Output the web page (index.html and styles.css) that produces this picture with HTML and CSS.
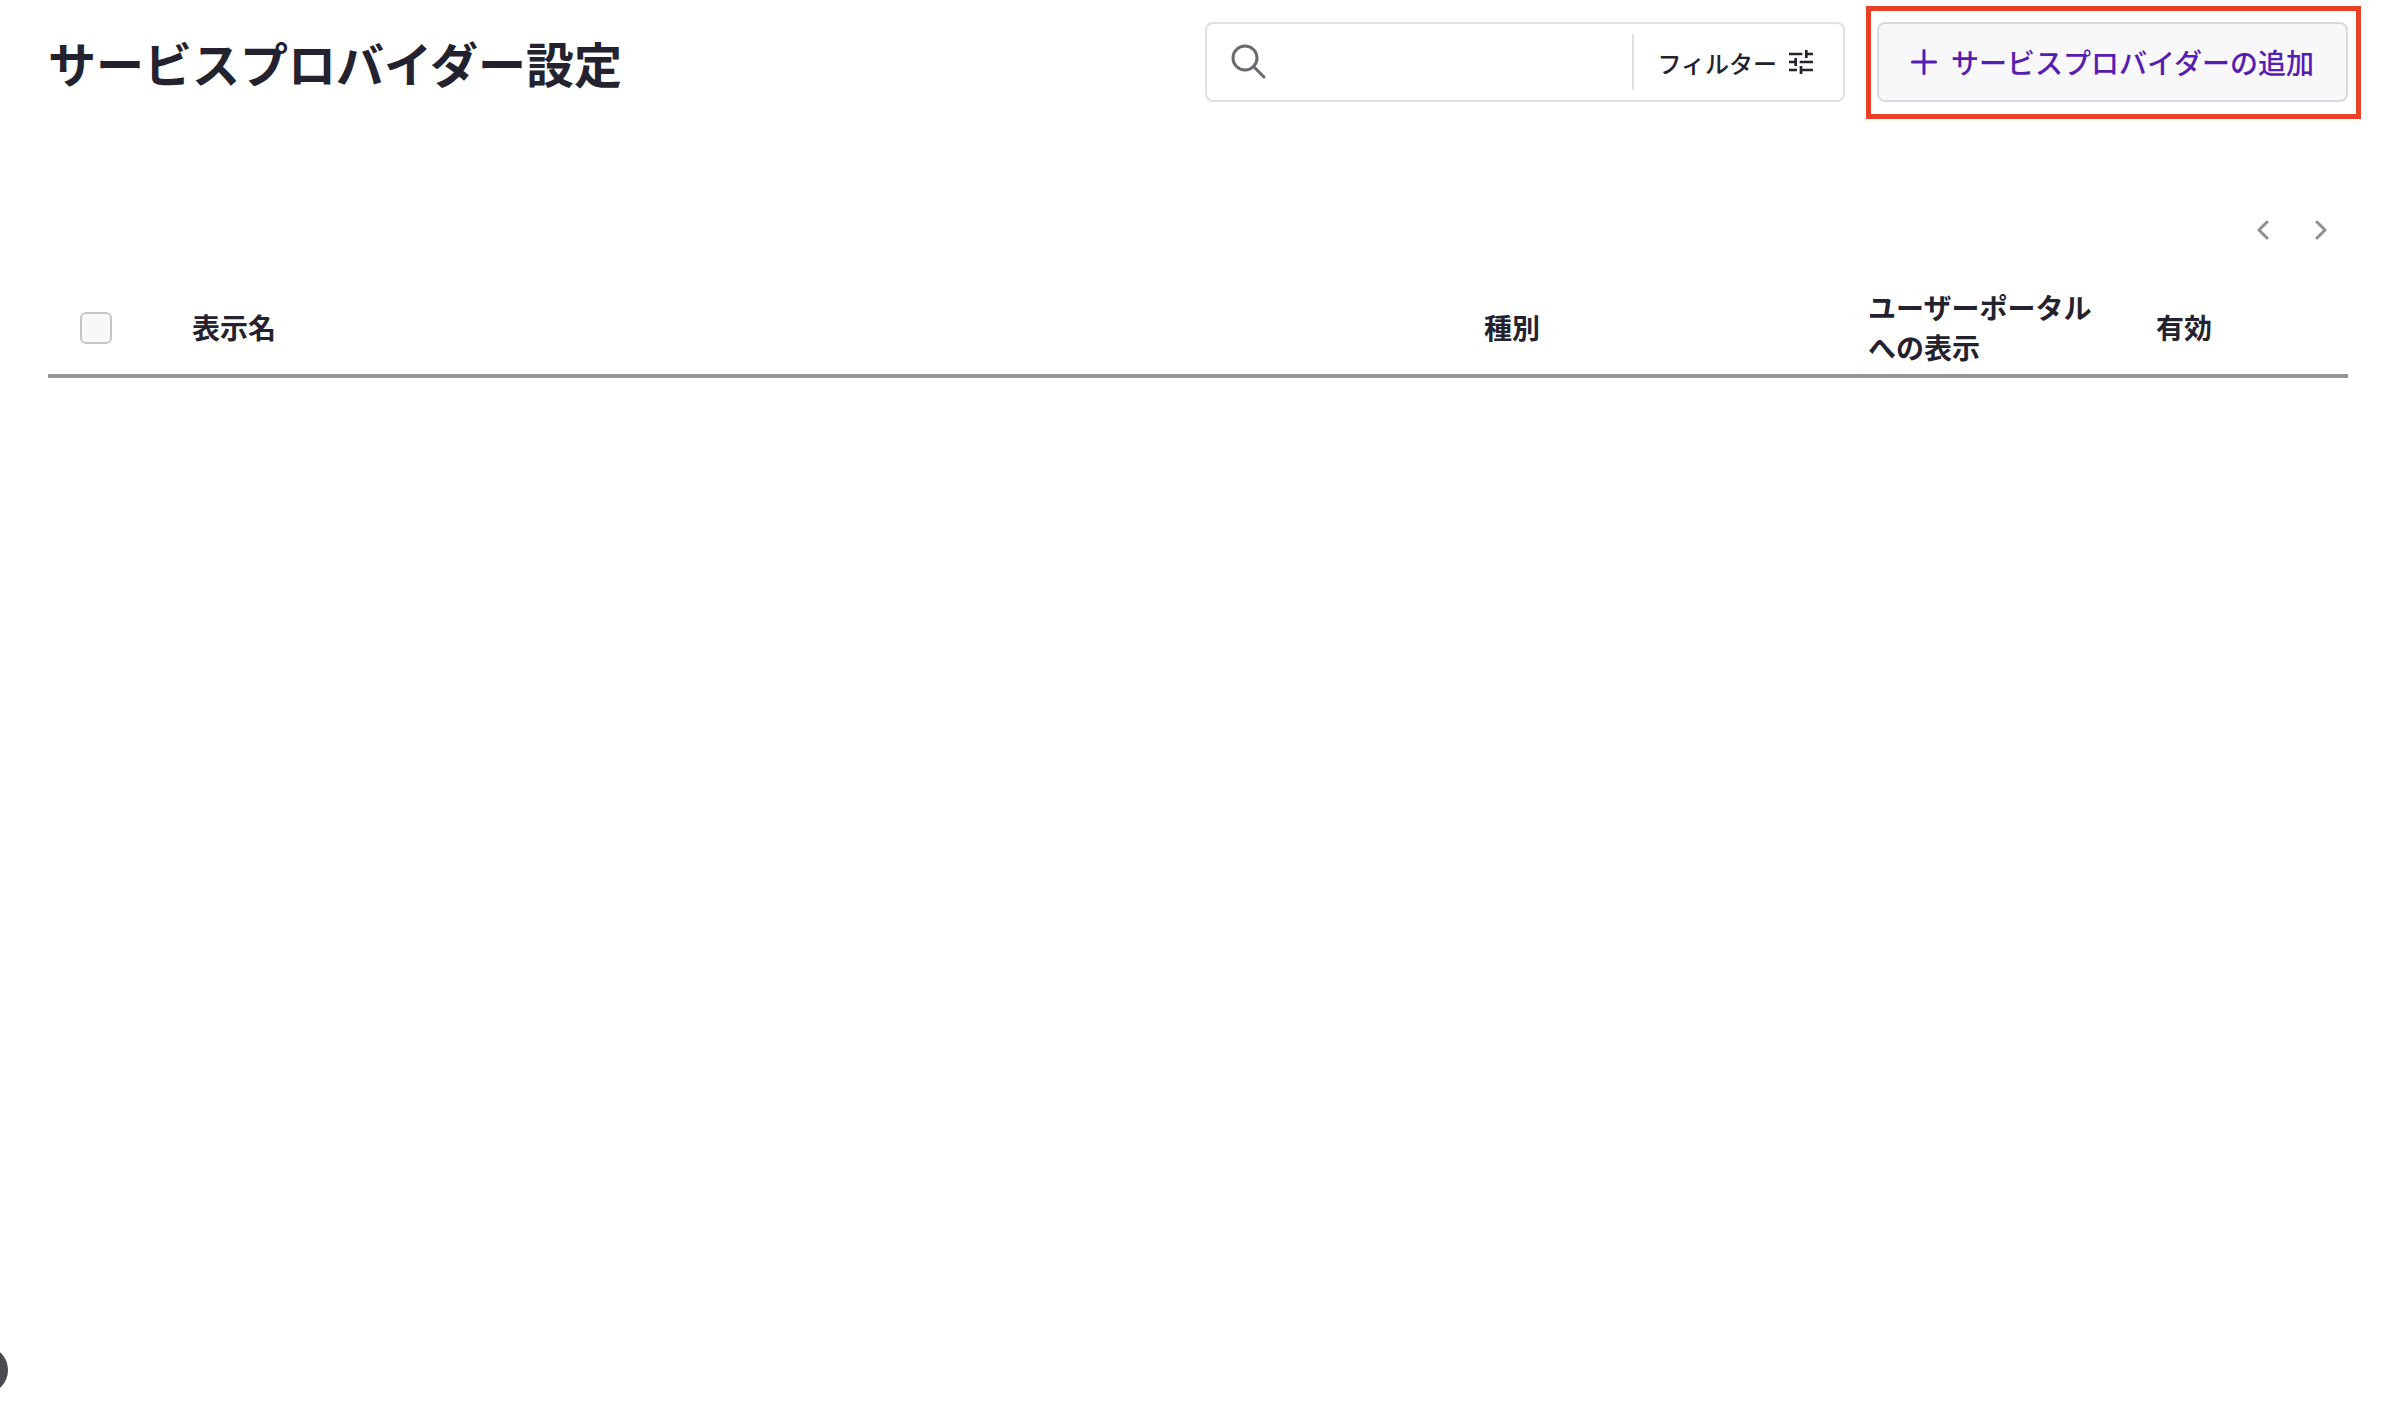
FILE: index.html
```html
<!DOCTYPE html>
<html lang="ja">
<head>
    <meta charset="UTF-8">
    <meta name="viewport" content="width=device-width, initial-scale=1.0">
    <title>サービスプロバイダー設定</title>
    <link rel="stylesheet" href="styles.css">
</head>
<body>
    <main class="page">
        <header class="page-header">
            <h1>サービスプロバイダー設定</h1>
            <form class="search-box" role="search">
                <label class="search-field">
                    <svg class="search-icon" viewBox="0 0 36 36" aria-hidden="true">
                        <circle cx="14" cy="14" r="12"/>
                        <path d="M22.5 22.5L33 33"/>
                    </svg>
                    <input type="search" aria-label="検索">
                </label>
                <button type="button" class="filter-button">
                    フィルター
                    <svg class="filter-icon" viewBox="0 0 24 24" aria-hidden="true">
                        <path d="M3 17v2h6v-2H3zM3 5v2h10V5H3zm10 16v-2h8v-2h-8v-2h-2v6h2zM7 9v2H3v2h4v2h2V9H7zm14 4v-2H11v2h10zm-6-4h2V7h4V5h-4V3h-2v6z"/>
                    </svg>
                </button>
            </form>
            <div class="highlight">
                <button type="button" class="add-button">
                    <svg class="plus-icon" viewBox="0 0 26 26" aria-hidden="true">
                        <path d="M13 1.5v23M1.5 13h23"/>
                    </svg>
                    サービスプロバイダーの追加
                </button>
            </div>
        </header>

        <nav class="pager" aria-label="ページ送り">
            <button type="button" aria-label="前へ">
                <svg viewBox="0 0 20 20" aria-hidden="true"><path d="M14 2L6 10l8 8"/></svg>
            </button>
            <button type="button" aria-label="次へ">
                <svg viewBox="0 0 20 20" aria-hidden="true"><path d="M6 2l8 8-8 8"/></svg>
            </button>
        </nav>

        <table class="providers">
            <thead>
                <tr>
                    <th class="col-check"><input type="checkbox" aria-label="すべて選択"></th>
                    <th>表示名</th>
                    <th class="col-type">種別</th>
                    <th class="col-portal">ユーザーポータルへの表示</th>
                    <th class="col-enabled">有効</th>
                </tr>
            </thead>
            <tbody></tbody>
        </table>
    </main>
    <button type="button" class="side-toggle" aria-label="メニュー"></button>
</body>
</html>
```
FILE: styles.css
```css
* {
    box-sizing: border-box;
}
body {
    margin: 0;
    background: #fff;
    color: #24222f;
    font-family: "Noto Sans CJK JP", sans-serif;
}
button,
input {
    font: inherit;
    color: inherit;
}
button {
    cursor: pointer;
}
svg {
    display: block;
    flex: none;
}
.page {
    padding: 22px 44px 0 48px;
}

/* header */
.page-header {
    display: flex;
    align-items: center;
    height: 80px;
}
h1 {
    margin: 0 auto 0 0;
    font-size: 48px;
    line-height: 80px;
    font-weight: 700;
}
.search-box {
    display: flex;
    align-items: center;
    width: 640px;
    height: 80px;
    margin-right: 32px;
    border: 2px solid #e0e0e0;
    border-radius: 8px;
}
.search-field {
    display: flex;
    align-items: center;
    flex: 1;
    min-width: 0;
    padding: 0 16px 0 24px;
}
.search-field input {
    flex: 1;
    min-width: 0;
    height: 56px;
    padding: 0 16px;
    border: none;
    outline: none;
    background: none;
    font-size: 28px;
}
.search-icon {
    width: 36px;
    height: 36px;
    fill: none;
    stroke: #6a6872;
    stroke-width: 3;
    stroke-linecap: round;
}
.filter-button {
    display: flex;
    align-items: center;
    gap: 8px;
    height: 56px;
    padding: 0 26px 0 24px;
    border: none;
    border-left: 2px solid #e0e0e0;
    background: none;
    font-size: 24px;
    font-weight: 500;
}
.filter-icon {
    width: 32px;
    height: 32px;
    fill: #24222f;
}
.highlight {
    position: relative;
}
.highlight::after {
    content: "";
    position: absolute;
    inset: -16px -13px -17px -11px;
    border: 5px solid #ea4025;
    pointer-events: none;
}
.add-button {
    display: flex;
    align-items: center;
    gap: 14px;
    height: 80px;
    padding: 0 32px;
    border: 2px solid #d9dadd;
    border-radius: 8px;
    background: #f8f8fb;
    color: #561db0;
    font-size: 28px;
    font-weight: 500;
}
.plus-icon {
    width: 26px;
    height: 26px;
    fill: none;
    stroke: #561db0;
    stroke-width: 3;
    stroke-linecap: round;
}

/* pager */
.pager {
    display: flex;
    justify-content: flex-end;
    gap: 18px;
    margin-top: 108px;
    padding-right: 7px;
}
.pager button {
    padding: 10px;
    border: none;
    background: none;
}
.pager svg {
    width: 20px;
    height: 20px;
    fill: none;
    stroke: #8f8f8f;
    stroke-width: 3;
    stroke-linecap: round;
    stroke-linejoin: round;
}

/* table */
.providers {
    width: 100%;
    margin-top: 32px;
    border-collapse: separate;
    border-spacing: 0;
    table-layout: fixed;
}
.providers th {
    padding: 5px 48px 7px 0;
    border-bottom: 4px solid #959595;
    font-size: 28px;
    line-height: 40px;
    font-weight: 700;
    text-align: left;
}
.providers .col-check {
    width: 144px;
    padding: 6px 48px 6px 32px;
}
.col-type {
    width: 384px;
}
.col-portal {
    width: 288px;
}
.col-enabled {
    width: 192px;
}
.providers input {
    display: block;
    width: 32px;
    height: 32px;
    margin: 0;
    appearance: none;
    border: 2px solid #c5c5c5;
    border-radius: 6px;
    background: #f8f8fb;
}

/* round button tucked into the left edge */
.side-toggle {
    position: fixed;
    left: -40px;
    bottom: 24px;
    width: 48px;
    height: 48px;
    padding: 0;
    border: none;
    border-radius: 50%;
    background: #4b4a50;
}
```
